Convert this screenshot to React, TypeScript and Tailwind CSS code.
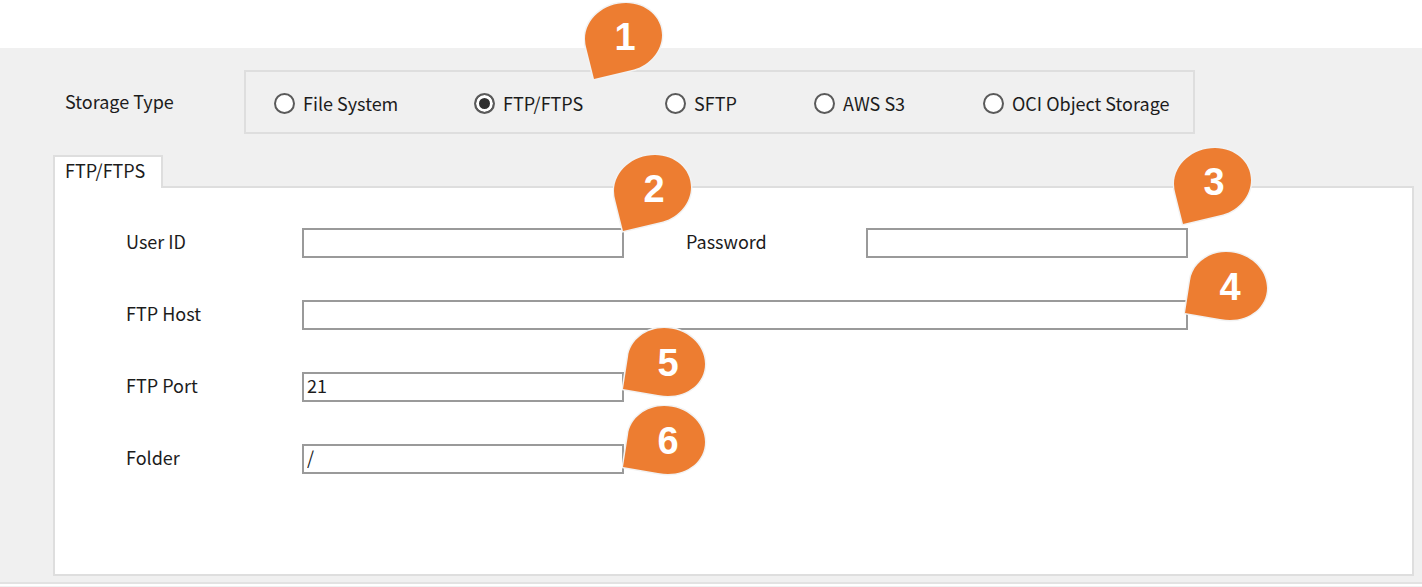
import { useState, type ReactNode } from "react";

const storageTypes = ["File System", "FTP/FTPS", "SFTP", "AWS S3", "OCI Object Storage"];

const pinClass = "pointer-events-none absolute z-10";
const digitClass = "fill-white font-['Liberation_Sans',Arial,sans-serif] text-[38px] font-bold";

function PinDown({ n, className }: { n: number; className: string }) {
  return (
    <svg className={`${pinClass} ${className}`} width="80" height="80" viewBox="0 0 80 80">
      <path
        d="M10 77 L2.5 47 Q1 42 1 37 C1 17 20 1 42 1 C62 1 78 15 78 33 C78 49 66 63 50 67.5 Z"
        fill="#ed7d31"
        stroke="#f2f2f2"
        strokeWidth="3"
        paintOrder="stroke"
      />
      <text x="41" y="48" textAnchor="middle" className={digitClass}>
        {n}
      </text>
    </svg>
  );
}

function PinLeft({ n, className }: { n: number; className: string }) {
  return (
    <svg className={`${pinClass} ${className}`} width="85" height="72" viewBox="0 0 85 72">
      <path
        d="M1 62 L6 30 C8 13 24 1 42 1 C64 1 83 17 83 37 C83 56 66 69 46 69 Q42 69 36 68 Z"
        fill="#ed7d31"
        stroke="#f2f2f2"
        strokeWidth="3"
        paintOrder="stroke"
      />
      <text x="46" y="49" textAnchor="middle" className={digitClass}>
        {n}
      </text>
    </svg>
  );
}

type FieldProps = {
  id: string;
  label: string;
  type?: string;
  value?: string;
  labelClass?: string;
  boxClass?: string;
  children?: ReactNode;
};

function Field({ id, label, type = "text", value = "", labelClass = "w-[176px]", boxClass = "w-[322px]", children }: FieldProps) {
  return (
    <div className="flex items-center">
      <label htmlFor={id} className={`shrink-0 pb-1 ${labelClass}`}>
        {label}
      </label>
      <div className={`relative ${boxClass}`}>
        <input
          id={id}
          type={type}
          defaultValue={value}
          className="block h-[30px] w-full border-2 border-[#9a9a9a] bg-white px-[3px] pb-1 outline-none"
        />
        {children}
      </div>
    </div>
  );
}

export default function App() {
  const [storage, setStorage] = useState("FTP/FTPS");

  return (
    <main className="bg-white pt-12 font-['Noto_Sans_CJK_JP','Liberation_Sans',sans-serif] text-[18px] leading-6 text-[#1c1c1c]">
      <div className="border-b-2 border-[#e2e2e2] bg-[#f0f0f0] pr-2 pb-1.5 pl-[53px] pt-[22px]">
        <fieldset className="flex items-center">
          <span id="storage-type" className="w-[191px] shrink-0 pb-0.5 pl-3">
            Storage Type
          </span>
          <div
            role="radiogroup"
            aria-labelledby="storage-type"
            className="relative grid h-16 w-[951px] grid-cols-[200px_191px_149px_169px_auto] items-center border-2 border-[#dedede] pt-0.5 pl-7"
          >
            {storageTypes.map((name) => (
              <label key={name} className="flex items-center gap-2 whitespace-nowrap">
                <input
                  type="radio"
                  name="storage"
                  checked={storage === name}
                  onChange={() => setStorage(name)}
                  className="size-[21px] shrink-0 appearance-none rounded-full border-2 border-[#5a5a5a] bg-white checked:bg-[#303030] checked:shadow-[inset_0_0_0_3px_#fff]"
                />
                {name}
              </label>
            ))}
            <PinDown n={1} className="-top-[70px] left-[338px]" />
          </div>
        </fieldset>

        <div role="tablist" className="mt-[21px] flex">
          <button
            role="tab"
            aria-selected="true"
            className="relative -mb-0.5 h-[33px] w-[110px] border-2 border-b-0 border-[#dedede] bg-white pb-1.5 pl-2.5 text-left"
          >
            FTP/FTPS
          </button>
        </div>
        <section
          role="tabpanel"
          className="flex min-h-[390px] flex-col gap-[42px] border-2 border-[#dedede] bg-white pt-10 pl-[71px]"
        >
          <div className="flex gap-[62px]">
            <Field id="user" label="User ID">
              <PinDown n={2} className="-top-[74px] left-[311px]" />
            </Field>
            <Field id="password" label="Password" type="password" labelClass="w-[180px]">
              <PinDown n={3} className="-top-[81px] left-[307px]" />
            </Field>
          </div>
          <Field id="host" label="FTP Host" boxClass="w-[886px]">
            <PinLeft n={4} className="-top-[49px] left-[882px]" />
          </Field>
          <Field id="port" label="FTP Port" value="21">
            <PinLeft n={5} className="-top-[45px] left-[320px]" />
          </Field>
          <Field id="folder" label="Folder" value="/">
            <PinLeft n={6} className="-top-[39px] left-[320px]" />
          </Field>
        </section>
      </div>
      <div className="mt-0.5 h-px bg-[#f0f0f0]" />
    </main>
  );
}
